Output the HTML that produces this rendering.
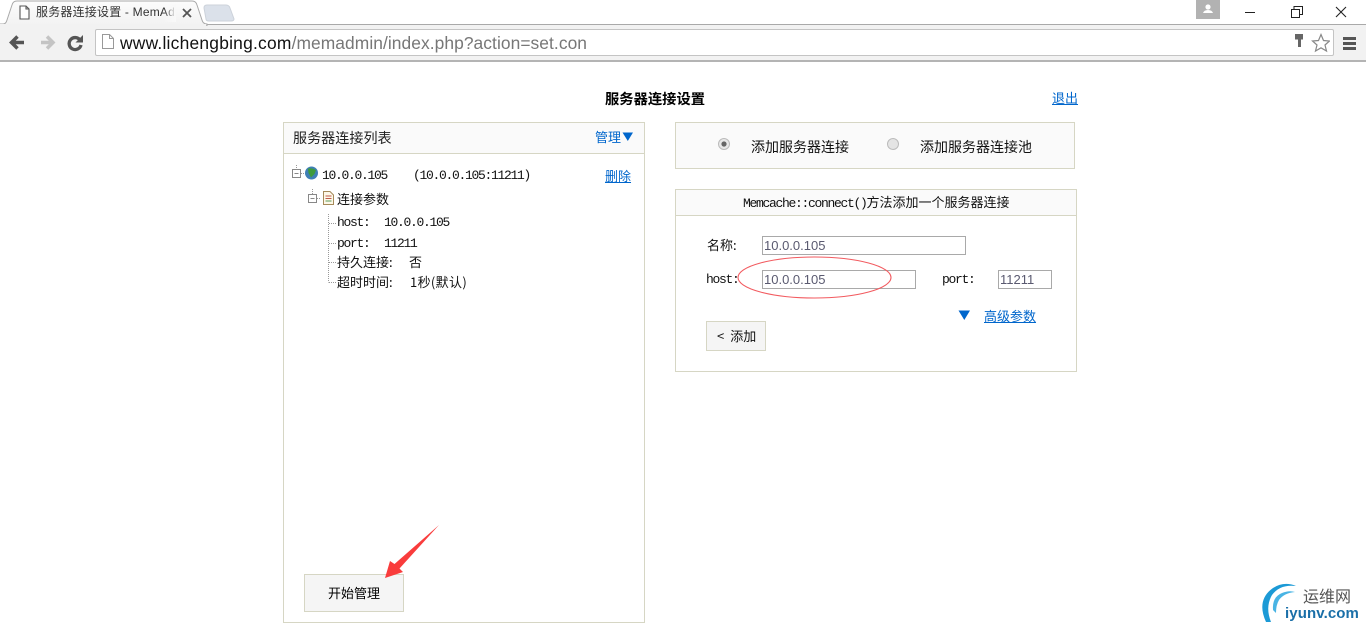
<!DOCTYPE html>
<html><head><meta charset="utf-8"><style>
html,body{margin:0;padding:0;background:#fff}
body{width:1366px;height:630px;position:relative;overflow:hidden;font-family:"Liberation Sans","WenQuanYi Zen Hei",sans-serif}
.a{position:absolute;white-space:pre}
.t{position:absolute;white-space:pre;font:13px/16px "Liberation Mono","WenQuanYi Zen Hei",monospace;color:#111;letter-spacing:-1.3px}
.c{position:absolute;white-space:pre;font:13px/16px "WenQuanYi Zen Hei","Noto Sans CJK SC",sans-serif;color:#111}
.box{position:absolute;box-sizing:border-box;border:1px solid #d6d6c4}
.in{position:absolute;box-sizing:border-box;border:1px solid #a9a9a9;background:#fff;font:13px/18px "Liberation Sans",sans-serif;color:#5a5a70;padding-left:1px;height:19px}
a{color:#0066cc;text-decoration:underline}
</style></head><body>
<!-- Chrome -->
<div class="a" style="left:0;top:0;width:1366px;height:62px;background:#fff"></div>
<div class="a" style="left:0;top:24px;width:1366px;height:1px;background:#a9a9a9"></div>
<div class="a" style="left:0;top:25px;width:1366px;height:35px;background:#f2f2f2"></div>
<div class="a" style="left:0;top:60px;width:1366px;height:2px;background:#b4b4b4"></div>
<svg class="a" style="left:0;top:0" width="240" height="26"><defs><linearGradient id="g" x1="0" y1="0" x2="0" y2="1"><stop offset="0" stop-color="#fcfcfc"/><stop offset="1" stop-color="#f2f2f2"/></linearGradient></defs><path d="M0 24H3Q6 24 7 20L12 5Q13 1 17 1H192Q196 1 197 5L202 20Q203 24 207 24V26H0Z" fill="url(#g)" stroke="#a9a9a9"/><path d="M0 25H206" stroke="#f2f2f2" stroke-width="2"/><path d="M204 8Q204 5 207 5H226Q229 5 230 8L234 19Q234 21 231 21H209Q206 21 206 19Z" fill="#dbe1ea" stroke="#ccd2da"/>
<path d="M20 6H26L29 9V19H20Z M26 6V9H29" fill="#fff" stroke="#555" stroke-width="1.1"/>
<path d="M183 9L191 17M191 9L183 17" stroke="#555" stroke-width="1.8"/></svg>
<div class="a" style="left:36px;top:5px;width:140px;overflow:hidden;font:12px/15px 'Liberation Sans','WenQuanYi Zen Hei',sans-serif;color:#333;letter-spacing:.2px">服务器连接设置 - MemAdmin</div>
<div class="a" style="left:164px;top:4px;width:12px;height:18px;background:linear-gradient(90deg,rgba(249,249,249,0),#f9f9f9)"></div>
<div class="a" style="left:1196px;top:0;width:24px;height:19px;background:#b2b2b2"></div>
<svg class="a" style="left:1196px;top:0" width="170" height="24"><circle cx="12" cy="7" r="2.6" fill="#fff"/><path d="M7 13Q8 10 12 10Q16 10 17 13Z" fill="#fff"/>
<path d="M49 12.500H59" stroke="#222"/><path d="M95.500 9.500H103.500V17.500H95.500ZM98 9V6.500H106.500V14.500H104" fill="none" stroke="#222"/><path d="M140 7L150 17M150 7L140 17" stroke="#222" stroke-width="1.1"/></svg>
<svg class="a" style="left:0;top:26px" width="100" height="34"><path d="M24 16.500H12M17.500 10.500L11.500 16.500L17.500 22.500" fill="none" stroke="#555" stroke-width="3.500"/><path d="M53 16.500H41M47 10.500L53 16.500L47 22.500" fill="none" stroke="#c4c4c4" stroke-width="3.500"/><path d="M80 14A6 6 0 1 0 81 19" fill="none" stroke="#555" stroke-width="3.300"/><path d="M83 9V16.500H75.500Z" fill="#555"/></svg>
<div class="a" style="left:95px;top:29px;width:1239px;height:27px;box-sizing:border-box;background:#fff;border:1px solid #c4c4c4;border-radius:2px"></div>
<svg class="a" style="left:100px;top:33px" width="16" height="18"><path d="M2.500 1.500H9.500L13.500 5.500V15.500H2.500Z M9.500 1.500V5.500H13.500" fill="#fff" stroke="#999"/></svg>
<div class="a" style="left:120px;top:33px;font:17.4px/20px 'Liberation Sans',sans-serif;color:#111;letter-spacing:.23px">www.lichengbing.com<span style="color:#777;letter-spacing:.06px">/memadmin/index.php?action=set.con</span></div>
<svg class="a" style="left:1290px;top:30px" width="40" height="24"><path d="M5 4H13V9.500H11V17H8V9.500H5Z" fill="#666"/><path d="M31 4.500L33.500 10.500L39.500 11L35 15L36.500 21L31 17.800L25.500 21L27 15L22.500 11L28.500 10.500Z" fill="#fff" stroke="#888" stroke-width="1.2"/></svg>
<div class="a" style="left:1343px;top:37px;width:13px;height:3px;background:#555"></div>
<div class="a" style="left:1343px;top:42px;width:13px;height:3px;background:#555"></div>
<div class="a" style="left:1343px;top:47px;width:13px;height:3px;background:#555"></div>

<!-- Title -->
<div class="c" style="left:605px;top:91px;font-weight:bold;font-size:14.3px;color:#000">服务器连接设置</div>
<a class="c" style="left:1052px;top:90px;color:#0066cc">退出</a>

<!-- Left panel -->
<div class="box" style="left:283px;top:122px;width:362px;height:501px"></div>
<div class="a" style="left:284px;top:123px;width:360px;height:30px;background:#fafafa;border-bottom:1px solid #d6d6c4"></div>
<div class="c" style="left:293px;top:130px;font-size:14.1px;color:#222">服务器连接列表</div>
<div class="c" style="left:595px;top:129px;color:#0066cc">管理</div>
<svg class="a" style="left:622px;top:132px" width="12" height="10"><path d="M0.500 0.500H11L5.800 9Z" fill="#0066cc"/></svg>

<svg class="a" style="left:285px;top:160px" width="70" height="135">
<g fill="none" stroke="#888"><rect x="7.500" y="9.500" width="8" height="8" fill="#fff"/><path d="M9.500 13.500H13.500"/><rect x="23.500" y="34.500" width="8" height="8" fill="#fff"/><path d="M25.500 38.500H29.500"/></g>
<g stroke="#999" stroke-dasharray="1 1" fill="none"><path d="M11.500 5V9M16 13.500H20M27.500 29V34M32 38.500H36M43.500 54V122.500M44 63.500H52M44 83.500H52M44 102.500H52M44 122.500H52"/></g>
<circle cx="26.500" cy="13" r="6.500" fill="#3f7fb5"/><path d="M23 8.500Q27 7.500 31 10L29.500 14L26 17.500L23.500 13Z" fill="#3e9b3c"/>
<path d="M38.500 31.500H45L48.500 35V44.500H38.500Z" fill="#fdf8e8" stroke="#a58a5a"/><path d="M40.500 36H46.500M40.500 38.500H46.500" stroke="#c05a4a"/><path d="M40.500 41H46.500" stroke="#5a9a5a"/>
</svg>
<div class="t" style="left:322px;top:168px">10.0.0.105</div>
<div class="t" style="left:413px;top:168px">(10.0.0.105:11211)</div>
<a class="c" style="left:605px;top:168px;color:#0066cc">删除</a>
<div class="c" style="left:337px;top:191px">连接参数</div>
<div class="t" style="left:337px;top:215px">host:</div><div class="t" style="left:384px;top:215px">10.0.0.105</div>
<div class="t" style="left:337px;top:236px">port:</div><div class="t" style="left:384px;top:236px">11211</div>
<div class="c" style="left:337px;top:254px">持久连接:</div><div class="c" style="left:409px;top:254px">否</div>
<div class="c" style="left:337px;top:274px">超时时间:</div><div class="c" style="left:410px;top:274px;letter-spacing:.35px">1秒(默认)</div>

<div class="box" style="left:304px;top:574px;width:100px;height:38px;background:#f5f5f5"></div>
<div class="c" style="left:328px;top:585px;color:#000">开始管理</div>

<!-- Right panels -->
<div class="box" style="left:675px;top:122px;width:400px;height:47px;background:#fafafa"></div>
<svg class="a" style="left:715px;top:135px" width="190" height="18"><circle cx="9" cy="9" r="5.500" fill="#e8e8e8" stroke="#bbb"/><circle cx="9" cy="9" r="2.600" fill="#666"/><circle cx="178" cy="9" r="5.500" fill="#e4e4e4" stroke="#bbb"/></svg>
<div class="c" style="left:751px;top:139px;font-size:14px">添加服务器连接</div>
<div class="c" style="left:920px;top:139px;font-size:14px">添加服务器连接池</div>

<div class="box" style="left:675px;top:189px;width:402px;height:183px"></div>
<div class="a" style="left:676px;top:190px;width:400px;height:25px;background:#fafafa;border-bottom:1px solid #d6d6c4"></div>
<div class="t" style="left:743px;top:195px">Memcache::connect()<span style="font-family:'WenQuanYi Zen Hei',sans-serif;letter-spacing:0">方法添加一个服务器连接</span></div>
<div class="c" style="left:707px;top:237px">名称:</div>
<div class="in" style="left:762px;top:236px;width:204px">10.0.0.105</div>
<div class="t" style="left:706px;top:272px">host:</div>
<div class="in" style="left:762px;top:270px;width:154px">10.0.0.105</div>
<div class="t" style="left:942px;top:272px">port:</div>
<div class="in" style="left:998px;top:270px;width:54px">11211</div>
<svg class="a" style="left:730px;top:252px" width="170" height="54"><ellipse cx="84.500" cy="25.500" rx="76.500" ry="20.500" fill="none" stroke="#f25a5f" stroke-width="1.1"/></svg>
<svg class="a" style="left:958px;top:310px" width="13" height="11"><path d="M0.500 0.500H12L6.300 10Z" fill="#0066cc"/></svg>
<a class="c" style="left:984px;top:308px;color:#0066cc">高级参数</a>
<div class="box" style="left:706px;top:321px;width:60px;height:30px;background:#f5f5f5"></div>
<div class="c" style="left:717px;top:328px;color:#111">&lt;<span style="margin-left:6px">添加</span></div>

<!-- Arrow -->
<svg class="a" style="left:380px;top:520px" width="65" height="62"><path d="M59 5L14.500 44L10 41L5 58L23 52L19.500 48.500Z" fill="#f93c3c"/></svg>

<!-- Logo -->
<svg class="a" style="left:1258px;top:580px" width="46" height="46"><path d="M8 42Q-2 20 15 8Q26 1 38 6Q22 4 14 15Q7 27 13 42Z" fill="#1c9ad6"/><path d="M15 30Q14 17 24 13Q31 10 37 12Q26 13 21 20Q18 25 18 33Z" fill="#49b4e4"/></svg>
<div class="a" style="left:1303px;top:585px;font:16px/20px 'WenQuanYi Zen Hei','Noto Sans CJK SC',sans-serif;color:#555">运维网</div>
<div class="a" style="left:1285px;top:605px;font:bold 15px/18px 'Liberation Sans',sans-serif;color:#1a6fa8;letter-spacing:.1px">iyunv.com</div>
</body></html>
